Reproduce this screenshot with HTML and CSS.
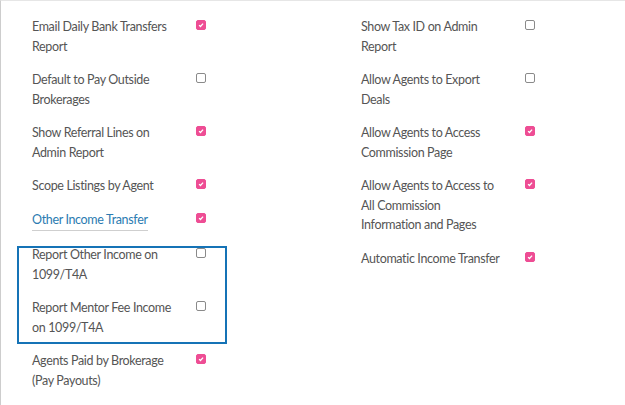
FILE: index.html
```html
<!DOCTYPE html>
<html lang="en">

<head>
    <meta charset="UTF-8">
    <meta name="viewport" content="width=device-width, initial-scale=1.0">
    <title>Settings</title>

    <link rel="stylesheet" href="styles.css">
</head>

<body>

    <div class="panel">

        <div class="column">
            <div class="row">
                <span class="label">Email Daily Bank Transfers<br>Report</span>
                <span class="check on"><svg viewBox="0 0 10 10"><path d="M2.6 5.2 L4.3 6.9 L7.6 3.2" /></svg></span>
            </div>
            <div class="row">
                <span class="label">Default to Pay Outside<br>Brokerages</span>
                <span class="check"></span>
            </div>
            <div class="row">
                <span class="label">Show Referral Lines on<br>Admin Report</span>
                <span class="check on"><svg viewBox="0 0 10 10"><path d="M2.6 5.2 L4.3 6.9 L7.6 3.2" /></svg></span>
            </div>
            <div class="row">
                <span class="label">Scope Listings by Agent</span>
                <span class="check on"><svg viewBox="0 0 10 10"><path d="M2.6 5.2 L4.3 6.9 L7.6 3.2" /></svg></span>
            </div>
            <div class="row">
                <span class="label"><a href="javascript:;" class="link">Other Income Transfer</a></span>
                <span class="check on"><svg viewBox="0 0 10 10"><path d="M2.6 5.2 L4.3 6.9 L7.6 3.2" /></svg></span>
            </div>
            <div class="row">
                <span class="label">Report Other Income on<br>1099/T4A</span>
                <span class="check"></span>
            </div>
            <div class="row">
                <span class="label">Report Mentor Fee Income<br>on 1099/T4A</span>
                <span class="check"></span>
            </div>
            <div class="row">
                <span class="label">Agents Paid by Brokerage<br>(Pay Payouts)</span>
                <span class="check on"><svg viewBox="0 0 10 10"><path d="M2.6 5.2 L4.3 6.9 L7.6 3.2" /></svg></span>
            </div>
        </div>

        <div class="column">
            <div class="row">
                <span class="label">Show Tax ID on Admin<br>Report</span>
                <span class="check"></span>
            </div>
            <div class="row">
                <span class="label">Allow Agents to Export<br>Deals</span>
                <span class="check"></span>
            </div>
            <div class="row">
                <span class="label">Allow Agents to Access<br>Commission Page</span>
                <span class="check on"><svg viewBox="0 0 10 10"><path d="M2.6 5.2 L4.3 6.9 L7.6 3.2" /></svg></span>
            </div>
            <div class="row">
                <span class="label">Allow Agents to Access to<br>All Commission<br>Information and Pages</span>
                <span class="check on"><svg viewBox="0 0 10 10"><path d="M2.6 5.2 L4.3 6.9 L7.6 3.2" /></svg></span>
            </div>
            <div class="row">
                <span class="label">Automatic Income Transfer</span>
                <span class="check on"><svg viewBox="0 0 10 10"><path d="M2.6 5.2 L4.3 6.9 L7.6 3.2" /></svg></span>
            </div>
        </div>

        <!-- highlight round the 1099 rows -->
        <div class="highlight"></div>

    </div>

</body>

</html>
```

FILE: styles.css
```css
* {
    margin: 0;
    padding: 0;
    box-sizing: border-box;
}

body {
    background-color: white;
    font-family: Lato, "Open Sans", sans-serif;
    font-size: 12.5px;
    letter-spacing: -0.35px;
    line-height: 19.5px;
    color: #555;
}

.panel {
    position: relative;
    display: grid;
    grid-template-columns: 329px 1fr;
    min-height: 100vh;
    padding: 16px 0 0 16px;
    border-top: 1px solid #e6e6e6;
    border-left: 1px solid #cdcdcd;
}

.column {
    display: flex;
    flex-direction: column;
    gap: 14px;
}

.row {
    display: flex;
    align-items: flex-start;
    padding-left: 15px;
}

.label {
    width: 164px;
    white-space: nowrap;
}

.link {
    display: inline-block;
    color: #2b7bb1;
    text-decoration: none;
    padding-bottom: 1px;
    border-bottom: 1px solid #cfcfcf;
}

.check {
    display: block;
    width: 10px;
    height: 10px;
    margin-top: 3px;
    border: 1px solid #8a8a8a;
    border-radius: 2px;
    background-color: white;
}

.check.on {
    border-color: #ee4d94;
    background-color: #ee4d94;
}

.check svg {
    display: block;
    width: 8px;
    height: 8px;
    fill: none;
    stroke: white;
    stroke-width: 1.6;
}

.highlight {
    position: absolute;
    top: 245px;
    left: 16px;
    width: 210px;
    height: 98px;
    border: 2px solid #1573b6;
}
```
